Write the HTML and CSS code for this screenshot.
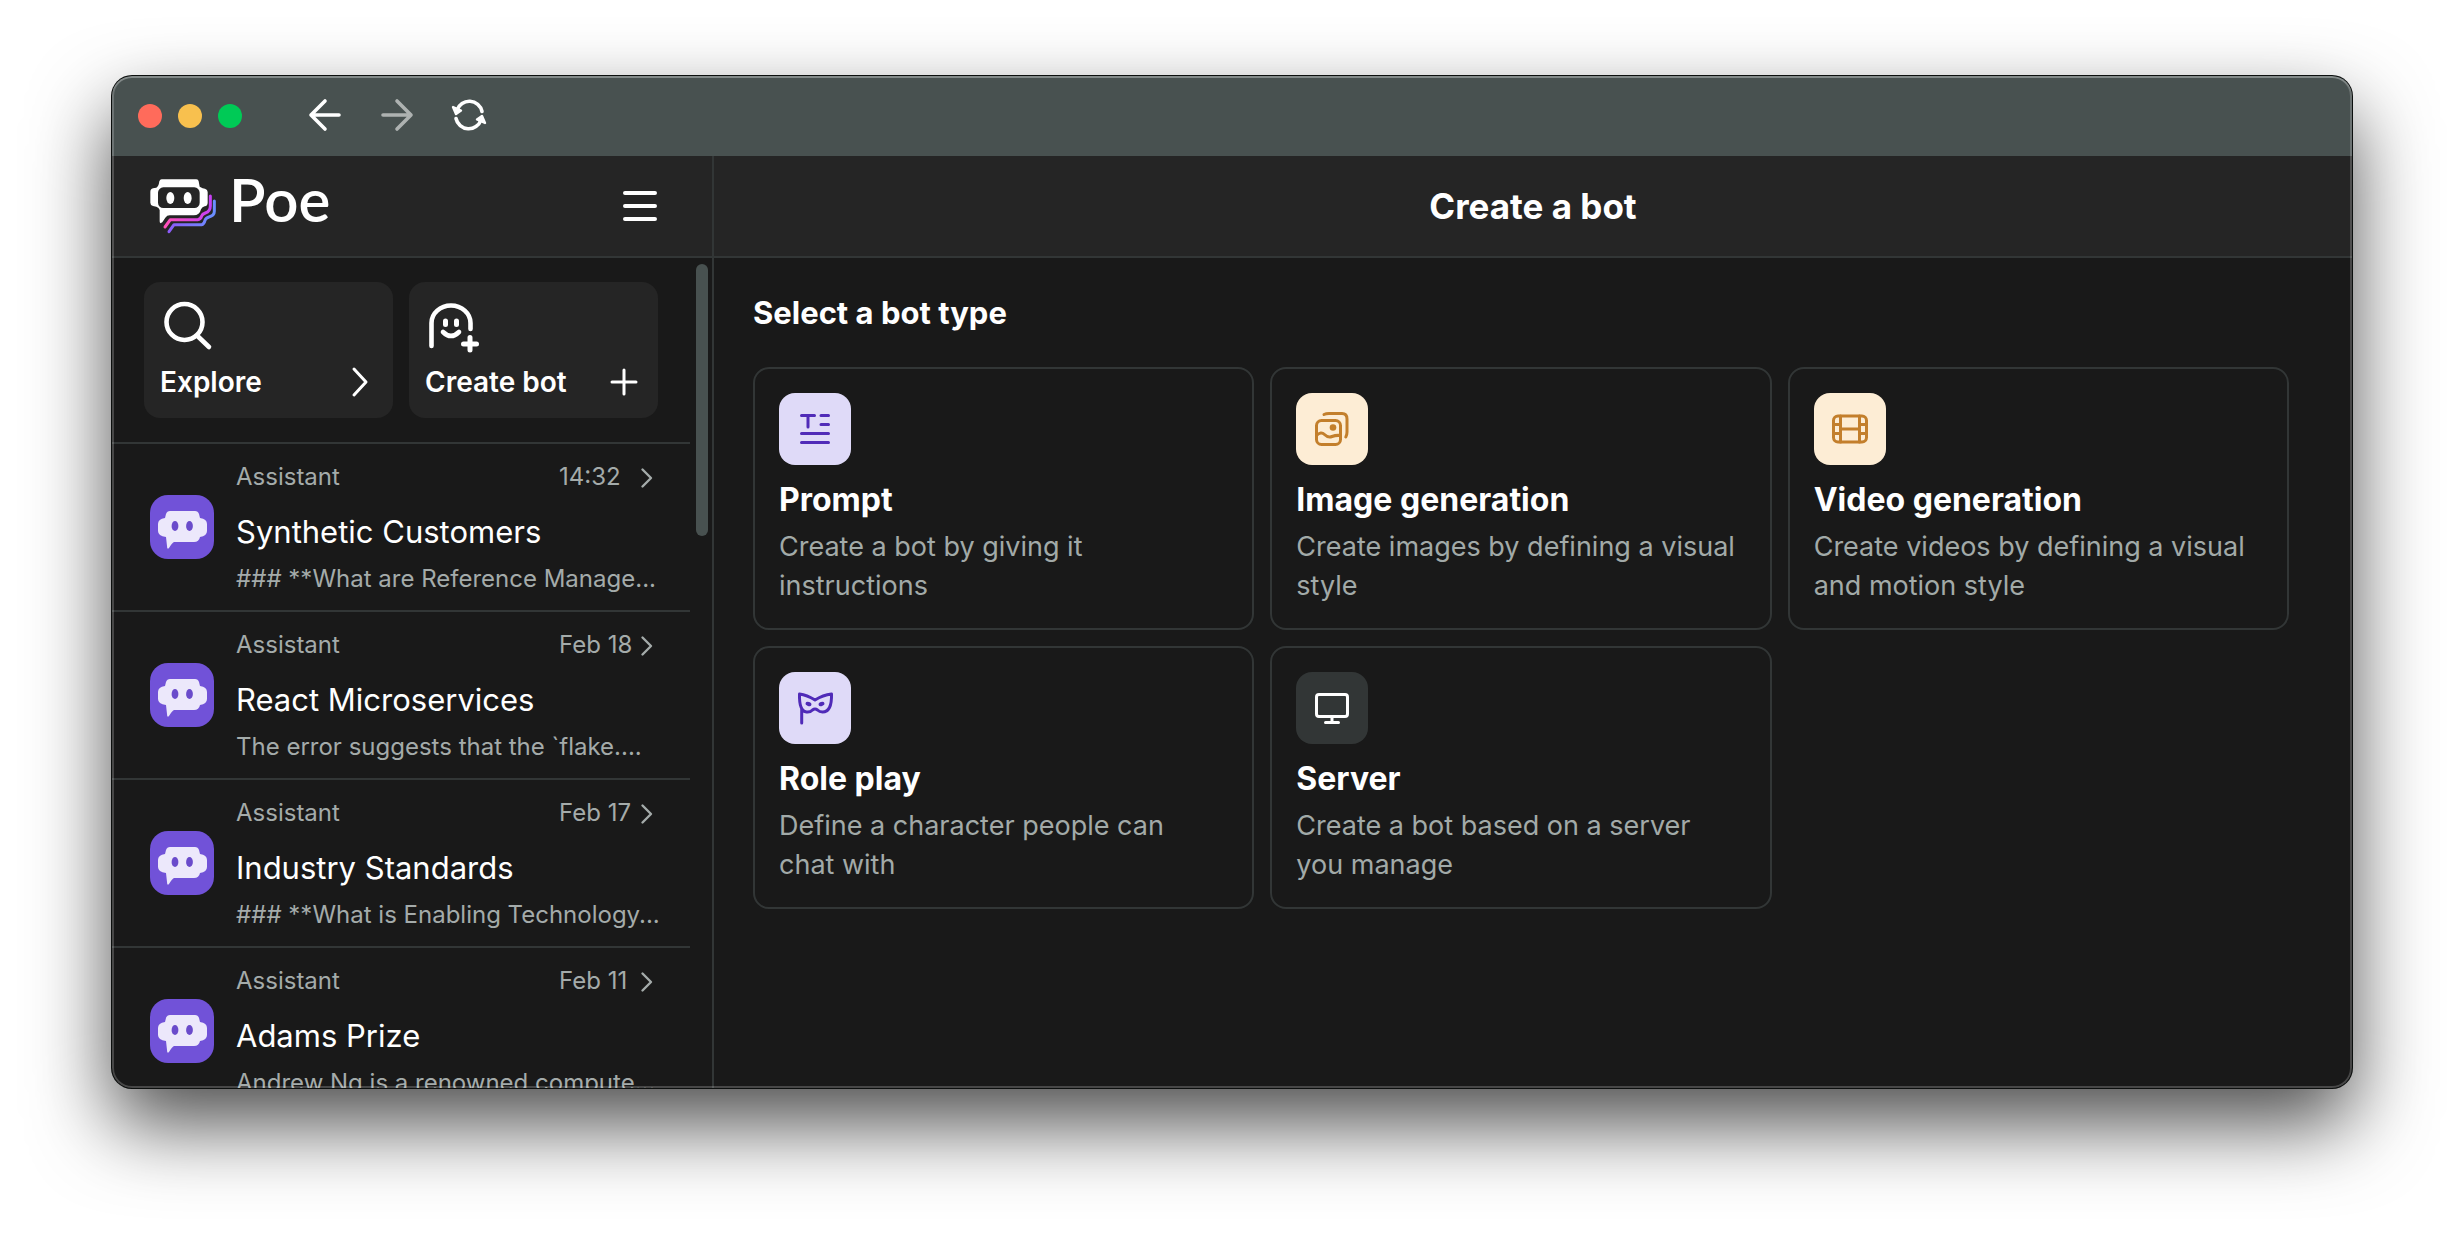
FILE: index.html
```html
<!DOCTYPE html>
<html lang="en">
<head>
<meta charset="utf-8">
<meta name="viewport" content="width=device-width, initial-scale=1">
<title>Poe</title>
<link rel="stylesheet" href="styles.css">
</head>
<body>
<svg class="defs" aria-hidden="true">
  <symbol id="chevron" viewBox="0 0 20 32"><path d="M4.500 8.500L13 17L4.500 25.500"/></symbol>
  <symbol id="avatar" viewBox="0 0 64 64">
    <path fill="#ece8fb" d="M20 16H45Q48 16 49 19L50 23Q57 24 57 29V36Q57 41 50 42Q49 47 44 47H24Q22 48 19 53Q17 55 17 51L16 42Q8 41 8 36V29Q8 24 15 23L16 19Q17 16 20 16Z"/>
    <ellipse fill="#6a4bcb" cx="25" cy="31" rx="3.4" ry="5"/><ellipse fill="#6a4bcb" cx="39.500" cy="31" rx="3.4" ry="5"/>
  </symbol>
</svg>
<div class="window">
  <div class="titlebar">
    <div class="lights"><span class="light red"></span><span class="light yellow"></span><span class="light green"></span></div>
    <nav class="history" aria-label="History">
      <button type="button" aria-label="Back"><svg viewBox="0 0 40 40"><path d="M34 19H6M20 5L6 19L20 33"/></svg></button>
      <button type="button" class="dim" aria-label="Forward"><svg viewBox="0 0 40 40"><path d="M6 19H34M20 5L34 19L20 33"/></svg></button>
      <button type="button" aria-label="Reload"><svg viewBox="0 0 40 40"><path d="M8 14A13 13 0 0 1 33 15.500M32 24A13 13 0 0 1 7 22.500"/><path class="head" d="M4 11L12 14.500L7 18ZM36 27L28 23.500L33 20Z"/></svg></button>
    </nav>
  </div>
  <div class="app">
    <aside class="sidebar">
      <header class="bar side-bar">
        <a class="brand" href="#">
          <svg class="logo" viewBox="28 38 204 168" aria-hidden="true">
            <defs>
              <linearGradient id="pink"><stop offset="0" stop-color="#ff4fb8"/><stop offset="1" stop-color="#c840f5"/></linearGradient>
              <linearGradient id="blue"><stop offset="0" stop-color="#8d5bf8"/><stop offset="1" stop-color="#6a8fff"/></linearGradient>
            </defs>
            <path fill="#fff" d="M66 42H170Q176 42 177 48L180 64Q190 70 196 70Q204 72 204 80V112Q204 121 195 123Q188 124 184 132Q180 150 162 150H90Q82 150 77 157L68 171Q60 177 60 168V134Q58 126 50 124L40 122Q32 120 32 112V80Q32 71 40 69L50 67Q57 64 59 48Q61 42 66 42Z"/>
            <rect x="55" y="66" width="125" height="62" rx="16" fill="#252525"/>
            <ellipse cx="92" cy="98" rx="12" ry="18" fill="#fff"/><ellipse cx="144" cy="98" rx="12" ry="18" fill="#fff"/>
            <path fill="none" stroke="url(#pink)" stroke-width="9" stroke-linecap="round" stroke-linejoin="round" d="M76 185L92 163H174Q183 162 186 152Q188 146 197 143Q212 138 212 122V92"/>
            <path fill="none" stroke="url(#blue)" stroke-width="9" stroke-linecap="round" stroke-linejoin="round" d="M88 199L103 178H186Q193 177 196 165Q198 158 208 155Q224 151 224 138V107"/>
          </svg>
          <span class="wordmark">Poe</span>
        </a>
        <button type="button" class="menu" aria-label="Menu"><svg viewBox="0 0 40 40"><path d="M5 7H35M5 20H35M5 33H35"/></svg></button>
      </header>
      <div class="side-body">
        <div class="side-scroll">
          <div class="actions">
            <button type="button" class="action">
              <svg class="action-icon" viewBox="0 0 56 56"><circle cx="24.500" cy="24" r="18"/><path d="M37.500 38L49 49"/></svg>
              <span class="action-row"><span>Explore</span><svg class="action-end" viewBox="0 0 32 40"><path d="M9 7L21 20L9 33"/></svg></span>
            </button>
            <button type="button" class="action">
              <svg class="action-icon" viewBox="0 0 56 56"><path d="M6.500 48V25A19.500 17.500 0 0 1 45.500 25V31M18 34Q26 42 34 34"/><path stroke-width="5" d="M20.500 23V26.500M31.500 23V26.500M45 39.500V52M38.500 46H51.500"/></svg>
              <span class="action-row"><span>Create bot</span><svg class="action-end" viewBox="0 0 32 40"><path d="M14 8V32M2 20H26"/></svg></span>
            </button>
          </div>
          <a class="chat" href="#">
            <svg class="avatar" aria-hidden="true"><use href="#avatar"/></svg>
            <div class="chat-text">
              <div class="chat-meta"><span class="bot">Assistant</span><time>14:32</time><svg class="chev"><use href="#chevron"/></svg></div>
              <div class="chat-title">Synthetic Customers</div>
              <div class="preview">### **What are Reference Manage...</div>
            </div>
          </a>
          <a class="chat" href="#">
            <svg class="avatar" aria-hidden="true"><use href="#avatar"/></svg>
            <div class="chat-text">
              <div class="chat-meta"><span class="bot">Assistant</span><time>Feb 18</time><svg class="chev"><use href="#chevron"/></svg></div>
              <div class="chat-title">React Microservices</div>
              <div class="preview">The error suggests that the `flake....</div>
            </div>
          </a>
          <a class="chat" href="#">
            <svg class="avatar" aria-hidden="true"><use href="#avatar"/></svg>
            <div class="chat-text">
              <div class="chat-meta"><span class="bot">Assistant</span><time>Feb 17</time><svg class="chev"><use href="#chevron"/></svg></div>
              <div class="chat-title">Industry Standards</div>
              <div class="preview">### **What is Enabling Technology...</div>
            </div>
          </a>
          <a class="chat" href="#">
            <svg class="avatar" aria-hidden="true"><use href="#avatar"/></svg>
            <div class="chat-text">
              <div class="chat-meta"><span class="bot">Assistant</span><time>Feb 11</time><svg class="chev"><use href="#chevron"/></svg></div>
              <div class="chat-title">Adams Prize</div>
              <div class="preview">Andrew Ng is a renowned compute...</div>
            </div>
          </a>
        </div>
        <div class="track"><div class="thumb"></div></div>
      </div>
    </aside>
    <main class="main">
      <header class="bar main-bar"><h1>Create a bot</h1></header>
      <section class="content">
        <h2>Select a bot type</h2>
        <div class="grid">
          <a class="card" href="#">
            <svg class="tile violet" viewBox="0 0 72 72"><path d="M22.500 22.500H35.500M29 22.500V34M42 22.500H49.500M42 31.500H49.500M22.500 40.500H49.500M22.500 49.500H49.500"/></svg>
            <h3>Prompt</h3>
            <p>Create a bot by giving it instructions</p>
          </a>
          <a class="card" href="#">
            <svg class="tile amber" viewBox="0 0 72 72"><rect x="20.500" y="27.500" width="24" height="24" rx="5"/><path d="M28 21.500Q30 20.500 33 20.500H46Q51 20.500 51 26V39Q51 42 49.800 44M20.500 42.500Q25 38 28.500 41.500T36 43.500T44.500 42.500"/><circle class="dot" cx="37" cy="34.500" r="3.300"/></svg>
            <h3>Image generation</h3>
            <p>Create images by defining a visual style</p>
          </a>
          <a class="card" href="#">
            <svg class="tile amber" viewBox="0 0 72 72"><rect x="19.500" y="23" width="33" height="26" rx="4.500"/><path d="M26.500 23V49M45.500 23V49M26.500 36H45.500M19.500 31.500H26.500M19.500 40.500H26.500M45.500 31.500H52.500M45.500 40.500H52.500"/></svg>
            <h3>Video generation</h3>
            <p>Create videos by defining a visual and motion style</p>
          </a>
          <a class="card" href="#">
            <svg class="tile violet" viewBox="0 0 72 72"><path d="M20.500 22Q28 23 36 28Q44 23 52.500 22Q53 40 43.500 40Q40.500 40 38.500 38Q36 36 33.500 38Q31 40.500 27.500 40Q20 39 20.500 22ZM22.700 37V51"/><ellipse class="dot" cx="29.500" cy="32" rx="3" ry="2" transform="rotate(18 29.500 32)"/><ellipse class="dot" cx="42.500" cy="32" rx="3" ry="2" transform="rotate(-18 42.500 32)"/></svg>
            <h3>Role play</h3>
            <p>Define a character people can chat with</p>
          </a>
          <a class="card" href="#">
            <svg class="tile grey" viewBox="0 0 72 72"><rect x="20.500" y="22.500" width="31" height="22" rx="2.500"/><path d="M36 44.500V50.500M29.500 50.500H42.500"/></svg>
            <h3>Server</h3>
            <p>Create a bot based on a server you manage</p>
          </a>
        </div>
      </section>
    </main>
  </div>
</div>
</body>
</html>
```
FILE: styles.css
```css
* { box-sizing: border-box; }

body {
  margin: 0;
  padding: 76px 112px 148px;
  height: 100vh;
  background: #fff;
  color: #fff;
  font-family: Inter, "Liberation Sans", sans-serif;
  overflow: hidden;
}

h1, h2, h3, p { margin: 0; }
a { color: inherit; text-decoration: none; }
button { margin: 0; padding: 0; border: 0; background: none; color: inherit; font: inherit; text-align: left; cursor: pointer; }
svg { display: block; flex: none; fill: none; stroke-linecap: round; stroke-linejoin: round; }
.defs { display: none; }

.window {
  position: relative;
  display: flex;
  flex-direction: column;
  height: 100%;
  border-radius: 20px;
  overflow: hidden;
  background: #191919;
  box-shadow: 0 0 0 1px #0c0f0e, 0 36px 80px rgba(0, 0, 0, .7);
}
/* light inner rim drawn over the window's contents */
.window::after {
  content: "";
  position: absolute;
  inset: 0;
  border-radius: inherit;
  pointer-events: none;
  box-shadow: inset 0 0 0 2px rgba(255, 255, 255, .2), inset 0 2px 0 rgba(255, 255, 255, .16);
}

.titlebar { display: flex; align-items: center; gap: 63px; flex: none; height: 80px; padding: 0 26px; background: #485150; }
.lights { display: flex; gap: 16px; }
.light { width: 24px; height: 24px; border-radius: 50%; }
.red { background: #ff6b5b; }
.yellow { background: #f8c04e; }
.green { background: #00ca56; }
.history { display: flex; gap: 32px; }
.history svg { width: 40px; height: 40px; stroke: #fff; stroke-width: 3.6; }
.history .dim svg { stroke: #aeb2b1; }
.history .head { fill: #fff; stroke-width: 2.4; }

.app { display: grid; grid-template-columns: 602px 1fr; flex: 1; min-height: 0; }
.sidebar { display: flex; flex-direction: column; min-height: 0; border-right: 2px solid #323636; }
.bar { display: flex; align-items: center; flex: none; height: 102px; border-bottom: 2px solid #323636; background: #252525; }
.side-bar { justify-content: space-between; padding: 0 52px 0 37px; }
.brand { display: flex; gap: 12px; }
.logo { width: 68px; height: 56px; }
.wordmark { font: 600 60px/42px Lato, sans-serif; }
.menu svg { width: 40px; height: 40px; stroke: #fff; stroke-width: 4; }

.side-body { display: flex; flex: 1; min-height: 0; }
.side-scroll { flex: 1; min-width: 0; overflow: hidden; }
.track { flex: none; width: 22px; padding: 6px 4px 0 6px; }
.thumb { height: 272px; border-radius: 6px; background: #485150; }

.actions { display: grid; grid-template-columns: 1fr 1fr; gap: 16px; padding: 24px 32px; }
.action { display: flex; flex-direction: column; gap: 8px; height: 136px; padding: 16px; border-radius: 16px; background: #252525; font-size: 28px; font-weight: 600; line-height: 40px; }
.action svg { stroke: #fff; }
.action-icon { width: 56px; height: 56px; stroke-width: 4.6; }
.action-row { display: flex; justify-content: space-between; width: 100%; }
.action-end { width: 32px; height: 40px; stroke-width: 3; }

.chat { display: flex; align-items: center; gap: 22px; height: 168px; padding: 0 32px 0 38px; border-top: 2px solid #323636; }
.avatar { width: 64px; height: 64px; border-radius: 18px; background: #7152d8; }
.chat-text { flex: 1; min-width: 0; padding-top: 2px; color: #a4abaa; font-size: 24px; line-height: 32px; white-space: nowrap; }
.chat-meta { display: flex; }
.bot { flex: 1; }
time { width: 79px; }
.chev { width: 20px; height: 32px; stroke: #a4abaa; stroke-width: 2.4; }
.chat-title { margin: 15px 0 7px; color: #fff; font-size: 31px; line-height: 48px; }

.main { min-width: 0; }
.main-bar { justify-content: center; }
h1 { font-size: 35px; font-weight: 700; line-height: 44px; }
.content { padding: 32px 63px 32px 39px; }
h2 { margin-bottom: 32px; font-size: 31px; font-weight: 700; line-height: 45px; }
.grid { display: grid; grid-template-columns: repeat(3, 1fr); gap: 16px; }
.card { padding: 24px 24px 23px; border: 2px solid #323636; border-radius: 16px; }
.tile { width: 72px; height: 72px; border-radius: 16px; stroke-width: 3; stroke: currentColor; }
.tile .dot { fill: currentColor; stroke: none; }
.violet { background: #dfdaf8; color: #502bb8; }
.amber { background: #fdedd5; color: #c37f2c; }
.grey { background: #323636; color: #fff; }
h3 { margin: 12px 0 5px; font-size: 32px; font-weight: 700; line-height: 45px; }
.card p { padding-right: 10px; color: #a2aaa8; font-size: 27px; line-height: 39px; }
```
